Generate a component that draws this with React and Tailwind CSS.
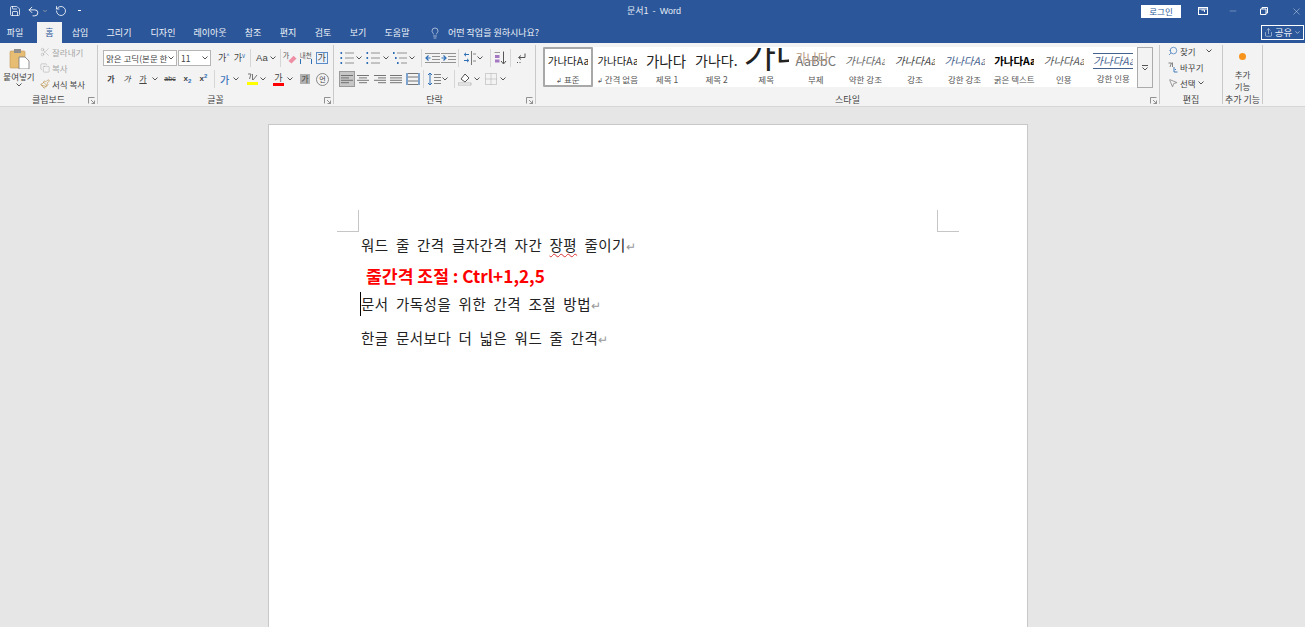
import React from "react";
import { Undo2, RotateCw, Save, Scissors, Copy, Paintbrush, Lightbulb, Search, MousePointer2, Share, X, Minus, ChevronDown } from "lucide-react";

const Caret = ({ className = "" }) => (
  <svg width="6" height="4" viewBox="0 0 6 4" className={`shrink-0 ${className}`}>
    <path d="M0.5 0.5 L3 3 L5.5 0.5" fill="none" stroke="#555" strokeWidth="1" />
  </svg>
);

const Launcher = () => (
  <svg width="7" height="7" viewBox="0 0 7 7" className="absolute right-[2px] bottom-[0px]">
    <path d="M0.5 6.5 V0.5 H6.5 M3 3 L6.5 6.5 M6.5 3.5 V6.5 H3.5" fill="none" stroke="#777" strokeWidth="0.8" />
  </svg>
);

const Sep = ({ className = "" }) => <div className={`w-px h-[18px] bg-[#d6d6d6] shrink-0 ${className}`} />;

const Lines = ({ align = "left", color = "#666" }) => {
  const rows =
    align === "left" ? [[1, 13], [1, 9], [1, 13], [1, 9]]
    : align === "center" ? [[1, 13], [3, 11], [1, 13], [3, 11]]
    : align === "right" ? [[1, 13], [5, 13], [1, 13], [5, 13]]
    : [[1, 13], [1, 13], [1, 13], [1, 13]];
  return (
    <svg width="14" height="12" viewBox="0 0 14 12">
      {rows.map((r, i) => (
        <path key={i} d={`M${r[0]} ${2.5 + i * 2.4} H${r[1]}`} stroke={color} strokeWidth="0.9" />
      ))}
    </svg>
  );
};

const DistIcon = () => (
  <svg width="14" height="14" viewBox="0 0 14 14">
    <path d="M1 1 V13 M13 1 V13" stroke="#2f6fb5" strokeWidth="1.2" />
    <path d="M2 1.5 H12 M2 5 H12 M2 9 H12 M2 12.5 H12" stroke="#666" strokeWidth="0.9" />
  </svg>
);

const ListIcon = ({ kind }) => (
  <svg width="14" height="14" viewBox="0 0 14 14">
    {[2, 7, 12].map((y, i) => (
      <g key={y}>
        <rect x={kind === "multi" ? i * 2 : 0.5} y={y - 1} width="1.6" height="2" fill="#2f6fb5" />
        <path d={`M${kind === "multi" ? 4 + i * 2 : 5} ${y} H14`} stroke="#888" strokeWidth="0.9" />
      </g>
    ))}
  </svg>
);

const IndentIcon = ({ dir }) => (
  <svg width="15" height="12" viewBox="0 0 15 12">
    {[1, 4, 7, 10].map((y) => (
      <path key={y} d={`M${y === 1 || y === 10 ? 0 : 7} ${y + 0.5} H15`} stroke="#888" strokeWidth="0.9" />
    ))}
    <path d={dir === "out" ? "M5.5 6 H1 M3.5 3.5 L1 6 L3.5 8.5" : "M0.5 6 H5 M2.5 3.5 L5 6 L2.5 8.5"} fill="none" stroke="#2f6fb5" strokeWidth="1.2" />
  </svg>
);

const TextDirIcon = () => (
  <svg width="13" height="14" viewBox="0 0 13 14">
    <path d="M8.5 0 V14" stroke="#777" strokeWidth="1" />
    <path d="M6 3.5 H1.5 M3 1.8 L1.2 3.5 L3 5.2 M1 9.5 H5.5 M4 7.8 L5.8 9.5 L4 11.2" fill="none" stroke="#2f6fb5" strokeWidth="1" />
    <path d="M10 3 H13 M10 10 H13" stroke="#888" strokeWidth="1" />
  </svg>
);

const SortIcon = () => (
  <svg width="13" height="14" viewBox="0 0 13 14">
    <path d="M0.5 1.5 H6" stroke="#999" strokeWidth="1" />
    <rect x="1" y="4" width="4.5" height="3" fill="#a678c4" />
    <rect x="1" y="8.5" width="4.5" height="3" fill="#a678c4" />
    <path d="M9.5 0.5 V12.5 M7 10 L9.5 13 L12 10" fill="none" stroke="#555" strokeWidth="1" />
  </svg>
);

const PilcrowIcon = () => (
  <svg width="11" height="11" viewBox="0 0 11 11">
    <path d="M9 0.5 V4.5 H3 M5 2.5 L2.5 4.5 L5 6.5" fill="none" stroke="#555" strokeWidth="1" />
    <path d="M1 9.5 H2 M3.5 9.5 H4.5" stroke="#555" strokeWidth="1" />
  </svg>
);

const LineSpacingIcon = () => (
  <svg width="14" height="14" viewBox="0 0 14 14">
    <path d="M3 1 V13 M1 3 L3 1 L5 3 M1 11 L3 13 L5 11" fill="none" stroke="#2f6fb5" strokeWidth="1" />
    <path d="M7 2.5 H14 M7 5.5 H14 M7 8.5 H14 M7 11.5 H14" stroke="#777" strokeWidth="0.9" />
  </svg>
);

const StyleItem = ({ sample, label, sampleClass = "", selected, mark }) => (
  <div className={`w-[49.6px] shrink-0 h-[40px] flex flex-col items-center overflow-hidden ${selected ? "border-2 border-[#a8a8a8] rounded-[1px]" : ""}`}>
    <div className={`h-[25px] overflow-hidden shrink-0 flex items-center whitespace-nowrap text-[#222] ${selected ? "mt-[-1px]" : "mt-[1px]"} ${sampleClass}`}>{sample}</div>
    <div className="text-[8.5px] leading-[12px] text-[#555] whitespace-nowrap">
      {mark && <span className="text-[7px] mr-[2px]">↲</span>}
      {label}
    </div>
  </div>
);

const styles = [
  { sample: "가나다Aa", label: "표준", sampleClass: "w-[40px] text-[10.5px]", selected: true, mark: true },
  { sample: "가나다Aa", label: "간격 없음", sampleClass: "w-[40px] text-[10.5px]", mark: true },
  { sample: "가나다", label: "제목 1", sampleClass: "w-[42px] text-[14.5px]" },
  { sample: "가나다.", label: "제목 2", sampleClass: "w-[43px] text-[14px]" },
  { sample: <span className="-translate-y-[7px]">가나</span>, label: "제목", sampleClass: "w-[45px] text-[35px] justify-start" },
  {
    sample: (
      <span className="relative text-[#777]">
        <span className="absolute left-0 -top-[2px] text-[#b79a80] text-[12px]">가나다</span>
        AaBbC
      </span>
    ),
    label: "부제",
    sampleClass: "w-[42px] text-[13px] justify-center",
  },
  { sample: "가나다Aa", label: "약한 강조", sampleClass: "w-[40px] text-[10.5px] italic text-[#666]" },
  { sample: "가나다Aa", label: "강조", sampleClass: "w-[40px] text-[10.5px] italic text-[#444]" },
  { sample: "가나다Aa", label: "강한 강조", sampleClass: "w-[40px] text-[10.5px] italic text-[#44608c]" },
  { sample: "가나다Aa", label: "굵은 텍스트", sampleClass: "w-[40px] text-[10.5px] font-bold text-black" },
  { sample: "가나다Aa", label: "인용", sampleClass: "w-[40px] text-[10.5px] italic text-[#555]" },
  { sample: "가나다Aa", label: "강한 인용", sampleClass: "w-[40px] text-[10.5px] italic text-[#44608c] border-y border-[#44608c] !h-[16px] !mt-[5.5px] mb-[3.5px]" },
];

const tabs = [
  ["파일", "w-[37px] pr-[7px]"], ["홈", "w-[25px]"], ["삽입", "w-[36px]"], ["그리기", "w-[42px]"], ["디자인", "w-[46px]"],
  ["레이아웃", "w-[48px]"], ["참조", "w-[38px]"], ["편지", "w-[32px]"], ["검토", "w-[38px]"], ["보기", "w-[32px]"], ["도움말", "w-[46px]"],
];

const GroupLabel = ({ children }) => (
  <div className="absolute bottom-[-3px] left-0 right-0 h-[14px] text-center text-[9px] leading-[13px] text-[#444]">{children}</div>
);

export default function App() {
  return (
    <div className="w-[1305px] h-[627px] overflow-hidden flex flex-col bg-[#e6e6e6]" style={{ fontFamily: '"Noto Sans CJK KR", "Noto Sans", sans-serif' }}>
      {/* 제목 표시줄 */}
      <div className="h-[22px] shrink-0 bg-[#2b579a] flex items-center text-white relative">
        <div className="flex items-center pl-[9px] gap-[6px] w-[100px]">
          <Save size={12} strokeWidth={1.5} />
          <div className="flex items-center gap-[2px]"><Undo2 size={13} strokeWidth={1.6} /><Caret className="scale-75 invert" /></div>
          <RotateCw size={12} strokeWidth={1.6} className="-scale-x-100 ml-[1px]" />
          <div className="w-[3px] h-[3px] border-t border-white ml-[5px]" />
        </div>
        <div className="absolute left-[627px] top-[3px] text-[9px] leading-[15px] whitespace-pre text-[#e4ebf5]">
          문서1  -  <span style={{ fontFamily: '"Liberation Sans"' }}>Word</span>
        </div>
        <div className="ml-auto flex items-center">
          <div className="w-[40px] h-[13px] bg-white text-[#2b579a] text-[8.5px] leading-[13px] text-center mr-[17px]">로그인</div>
          <svg width="10" height="8" viewBox="0 0 10 8" className="mr-[20px]">
            <rect x="0.5" y="0.5" width="9" height="7" fill="none" stroke="#fff" />
            <path d="M0.5 2 H9.5 M3.5 3 H6.5 V5" stroke="#fff" fill="none" />
          </svg>
          <Minus size={10} strokeWidth={1} className="mr-[22px] text-[#ccd6e8]" />
          <svg width="8" height="8" viewBox="0 0 8 8" className="mr-[23px]">
            <path d="M0.5 2 H6 V7.5 H0.5 Z M2 2 V0.5 H7.5 V6 H6" fill="none" stroke="#fff" />
          </svg>
          <X size={11} strokeWidth={1} className="mr-[3px] text-[#dfe6f2]" />
        </div>
      </div>

      {/* 탭 */}
      <div className="h-[21px] shrink-0 bg-[#2b579a] flex items-stretch text-[9px] text-[#eef2f8] relative">
        {tabs.map(([name, w]) => (
          <div key={name} className={`${w} flex items-center justify-center ${name === "홈" ? "bg-[#f3f3f3] text-[#2b579a]" : ""}`}>{name}</div>
        ))}
        <div className="flex items-center ml-[9px] gap-[7px]">
          <Lightbulb size={12} strokeWidth={1.2} />
          <span className="text-[9px]">어떤 작업을 원하시나요?</span>
        </div>
        <div className="ml-auto mr-[1px] mt-[3px] w-[43px] h-[15px] border border-white flex items-center justify-center gap-[2px] text-[9.5px]">
          <Share size={9} strokeWidth={1.4} />
          공유
          <ChevronDown size={7} />
        </div>
      </div>

      {/* 리본 */}
      <div className="h-[64px] shrink-0 bg-[#f3f3f3] border-b border-[#d6d6d6] flex text-[#444]">
        {/* 클립보드 */}
        <div className="w-[98px] shrink-0 relative border-r border-[#c9c9c9] my-[2px] flex pl-[2px]">
          <div className="w-[34px] flex flex-col items-center">
            <svg width="21" height="21" viewBox="0 0 21 21" className="mt-[3px]">
              <rect x="1" y="3" width="15" height="17" rx="1" fill="#e7bd74" stroke="#c49a55" strokeWidth="0.6" />
              <rect x="5" y="1" width="7" height="4" fill="#8f8f8f" />
              <path d="M10 9 H16 L20 13 V21 H10 Z" fill="#fff" stroke="#777" strokeWidth="0.8" />
            </svg>
            <div className="text-[8.5px] leading-[11px] whitespace-nowrap mt-[2px]">붙여넣기</div>
            <Caret className="mt-[1px]" />
          </div>
          <div className="flex flex-col ml-[4px] -mt-[1px] text-[8.5px] leading-[16px]">
            <div className="flex items-center gap-[2px] text-[#a6a6a6]"><Scissors size={10} strokeWidth={1.2} />잘라내기</div>
            <div className="flex items-center gap-[2px] text-[#a6a6a6]"><Copy size={10} strokeWidth={1.2} />복사</div>
            <div className="flex items-center gap-[2px]"><Paintbrush size={10} strokeWidth={1.4} className="text-[#b0812f]" />서식 복사</div>
          </div>
          <GroupLabel>클립보드</GroupLabel>
          <Launcher />
        </div>

        {/* 글꼴 */}
        <div className="w-[236px] shrink-0 relative border-r border-[#c9c9c9] my-[2px] pl-[5px] pt-[4px]">
          <div className="flex items-center h-[18px]">
            <div className="w-[74px] h-[16px] bg-white border border-[#b5b5b5] flex items-center justify-between px-[2px] text-[8.5px]">
              <span className="w-[62px] overflow-hidden whitespace-nowrap">맑은 고딕(본문 한글)</span><Caret />
            </div>
            <div className="w-[33px] h-[16px] ml-[1px] bg-white border border-[#b5b5b5] flex items-center justify-between px-[2px] text-[8.5px]">
              11<Caret />
            </div>
            <span className="text-[9px] ml-[7px]">가<sup className="text-[#2f6fb5] text-[6px]">^</sup></span>
            <span className="text-[9px] ml-[4px]">가<sup className="text-[#2f6fb5] text-[6px]">v</sup></span>
            <Sep className="ml-[5px]" />
            <span className="text-[9.5px] ml-[5px] flex items-center gap-[2px]" style={{ fontFamily: '"Liberation Sans"' }}>Aa<Caret /></span>
            <Sep className="ml-[4px]" />
            <span className="ml-[2px] w-[15px] h-[14px] flex items-start text-[7px] leading-[9px] text-[#555]">
              가
              <svg width="9" height="9" viewBox="0 0 9 9" className="-ml-[1px] mt-[4px] shrink-0">
                <path d="M0.5 6 L5.5 0.8 L8.5 3.5 L3.5 8.5 Z" fill="#ef8fa5" />
              </svg>
            </span>
            <span className="ml-[2px] text-[6.5px] leading-[7px] text-center w-[12px] text-[#555]">내천<div className="h-[5px] border-x border-[#2f6fb5]" /></span>
            <span className="ml-[4px] w-[12px] h-[12px] border border-[#5b8cc8] bg-[#eaf2fb] flex items-center justify-center text-[9px]">가</span>
          </div>
          <div className="flex items-center h-[18px] mt-[3px] text-[8px]">
            <span className="font-bold w-[16px] text-center">가</span>
            <span className="italic w-[16px] text-center">가</span>
            <span className="underline w-[16px] text-center">가</span>
            <Caret className="ml-[1px] mr-[5px]" />
            <span className="line-through text-[7px] w-[14px] text-center" style={{ fontFamily: '"Liberation Sans"' }}>abc</span>
            <span className="font-bold w-[17px] text-center ml-[2px]" style={{ fontFamily: '"Liberation Sans"' }}>x<sub className="text-[#2f6fb5] text-[6px]">2</sub></span>
            <span className="font-bold w-[15px] text-center" style={{ fontFamily: '"Liberation Sans"' }}>x<sup className="text-[#2f6fb5] text-[6px]">2</sup></span>
            <Sep className="ml-[3px]" />
            <span className="text-[10px] text-[#3f78bd] font-medium ml-[5px] w-[11px]">가</span>
            <Caret className="ml-[2px]" />
            <span className="ml-[8px] w-[11px] flex flex-col items-center leading-[10px] text-[9px]">
              <svg width="11" height="9" viewBox="0 0 11 9"><path d="M1 1 H4 L2.5 6 M5.5 1 V7 M6 7 L10 2" fill="none" stroke="#666" strokeWidth="0.9" /></svg>
              <span className="w-[11px] h-[3px] bg-[#ffff00]" />
            </span>
            <Caret className="ml-[2px]" />
            <span className="ml-[7px] w-[11px] flex flex-col items-center leading-[10px] text-[9px]">가<span className="w-[11px] h-[3px] bg-[#ff0000]" /></span>
            <Caret className="ml-[3px]" />
            <span className="ml-[7px] w-[10px] h-[10px] bg-[#b0b0b0] text-[8px] leading-[10px] text-center">가</span>
            <span className="ml-[6px] w-[13px] h-[13px] rounded-full border border-[#888] text-[7px] leading-[11px] text-center">언</span>
          </div>
          <GroupLabel>글꼴</GroupLabel>
          <Launcher />
        </div>

        {/* 단락 */}
        <div className="w-[202px] shrink-0 relative border-r border-[#c9c9c9] my-[2px] pl-[6px] pt-[4px]">
          <div className="flex items-center h-[18px]">
            <ListIcon /><Caret className="ml-[2px]" />
            <div className="ml-[4px]"><ListIcon /></div><Caret className="ml-[3px]" />
            <div className="ml-[4px]"><ListIcon kind="multi" /></div><Caret className="ml-[2px]" />
            <Sep className="ml-[6px]" />
            <div className="ml-[3px]"><IndentIcon dir="out" /></div>
            <div className="ml-[1px]"><IndentIcon dir="in" /></div>
            <Sep className="ml-[2px]" />
            <div className="ml-[4px]"><TextDirIcon /></div><Caret className="ml-[1px]" />
            <Sep className="ml-[7px]" />
            <div className="ml-[3px]"><SortIcon /></div>
            <Sep className="ml-[3px]" />
            <div className="ml-[5px]"><PilcrowIcon /></div>
          </div>
          <div className="flex items-center h-[18px] mt-[3px]">
            <div className="w-[16px] h-[16px] bg-[#c6c6c6] border border-[#9a9a9a] flex items-center justify-center -ml-[1px]"><Lines /></div>
            <div className="w-[16px] flex justify-center"><Lines align="center" /></div>
            <div className="ml-[1px] w-[16px] flex justify-center"><Lines align="right" /></div>
            <div className="w-[16px] flex justify-center"><Lines align="justify" /></div>
            <div className="ml-[1px] w-[16px] flex justify-center"><DistIcon /></div>
            <Sep className="ml-[2px]" />
            <div className="ml-[3px]"><LineSpacingIcon /></div><Caret className="ml-[1px]" />
            <Sep className="ml-[6px]" />
            <svg width="14" height="14" viewBox="0 0 14 14" className="ml-[3px]">
              <path d="M3 7 L7 2 L11 6 L7 10 Z" fill="#fff" stroke="#555" />
              <rect x="0" y="11" width="13" height="2" fill="#fff" stroke="#888" strokeWidth="0.5" />
            </svg>
            <Caret className="ml-[2px]" />
            <svg width="12" height="12" viewBox="0 0 12 12" className="ml-[5px]">
              <path d="M0.5 0.5 H11.5 V11.5 H0.5 Z M6 0.5 V11.5 M0.5 6 H11.5" fill="none" stroke="#aaa" strokeDasharray="1 1" />
            </svg>
            <Caret className="ml-[3px]" />
          </div>
          <GroupLabel>단락</GroupLabel>
          <Launcher />
        </div>

        {/* 스타일 */}
        <div className="w-[624px] shrink-0 relative border-r border-[#c9c9c9] my-[2px] pl-[7px] pt-[2px]">
          <div className="flex h-[41px] w-[610px]">
            <div className="flex w-[594px] h-[40px] bg-white">
              {styles.map((s) => <StyleItem key={s.label} {...s} />)}
            </div>
            <div className="w-[16px] h-[41px] bg-[#f3f3f3] border border-[#ababab] flex flex-col items-center justify-center">
              <div className="w-[6px] border-t border-[#555] mb-[1px]" />
              <Caret />
            </div>
          </div>
          <GroupLabel>스타일</GroupLabel>
          <Launcher />
        </div>

        {/* 편집 */}
        <div className="w-[63px] shrink-0 relative border-r border-[#c9c9c9] my-[2px] pl-[8px] text-[8.5px] leading-[16px]">
          <div className="-mt-[2px]">
            <div className="flex items-center gap-[2px]"><Search size={10} strokeWidth={1.6} className="text-[#2f6fb5] -scale-x-100" />찾기<Caret className="ml-[8px]" /></div>
            <div className="flex items-center gap-[2px]">
              <svg width="10" height="11" viewBox="0 0 10 11">
                <path d="M0.5 1 H3.5 L2 5 M4.5 0.5 V5" fill="none" stroke="#666" strokeWidth="0.8" />
                <path d="M6 5 V10 H9.5 M7.5 7 V8" fill="none" stroke="#2f6fb5" strokeWidth="0.9" />
              </svg>
              바꾸기
            </div>
            <div className="flex items-center gap-[2px]"><MousePointer2 size={10} strokeWidth={1.2} />선택<Caret /></div>
          </div>
          <GroupLabel>편집</GroupLabel>
        </div>

        {/* 추가 기능 */}
        <div className="w-[40px] shrink-0 relative my-[2px] border-r border-[#c9c9c9] flex flex-col items-center pt-[8px] text-[8.5px] leading-[12px]">
          <div className="w-[7px] h-[7px] rounded-full bg-[#f7941d] mb-[8px]" />
          <div className="text-center">추가<br />기능</div>
          <GroupLabel>추가 기능</GroupLabel>
        </div>
      </div>

      {/* 문서 영역 */}
      <div className="flex-1 pt-[17px] pl-[268px] overflow-hidden">
        <div className="w-[760px] h-[520px] bg-white border border-[#c8c8c8] relative pt-[109px] pl-[92px] text-[14.5px] text-[#222]">
          <div className="absolute left-[68px] top-[85px] w-[22px] h-[22px] border-r border-b border-[#c6c6c6]" />
          <div className="absolute left-[668px] top-[85px] w-[22px] h-[22px] border-l border-b border-[#c6c6c6]" />
          <p className="leading-[21px] whitespace-nowrap tracking-[0.5px]" style={{ wordSpacing: "3.5px" }}>
            워드 줄 간격 글자간격 자간 <span className="underline decoration-wavy decoration-[#d33] decoration-1 underline-offset-2">장평</span> 줄이기<span className="text-[#999] text-[12px]">↵</span>
          </p>
          <p className="mt-[9px] ml-[5px] leading-[21px] text-[17.2px] font-bold text-[#ff0000] whitespace-nowrap">줄간격 조절 : Ctrl+1,2,5</p>
          <p className="mt-[7px] leading-[21px] whitespace-nowrap tracking-[0.5px] relative" style={{ wordSpacing: "3.5px" }}>
            <span className="absolute -left-[1px] -top-[1px] w-px h-[24px] bg-black" />
            문서 가독성을 위한 간격 조절 방법<span className="text-[#999] text-[12px]">↵</span>
          </p>
          <p className="mt-[12px] leading-[21px] whitespace-nowrap tracking-[0.5px]" style={{ wordSpacing: "3.5px" }}>
            한글 문서보다 더 넓은 워드 줄 간격<span className="text-[#999] text-[12px]">↵</span>
          </p>
        </div>
      </div>
    </div>
  );
}
